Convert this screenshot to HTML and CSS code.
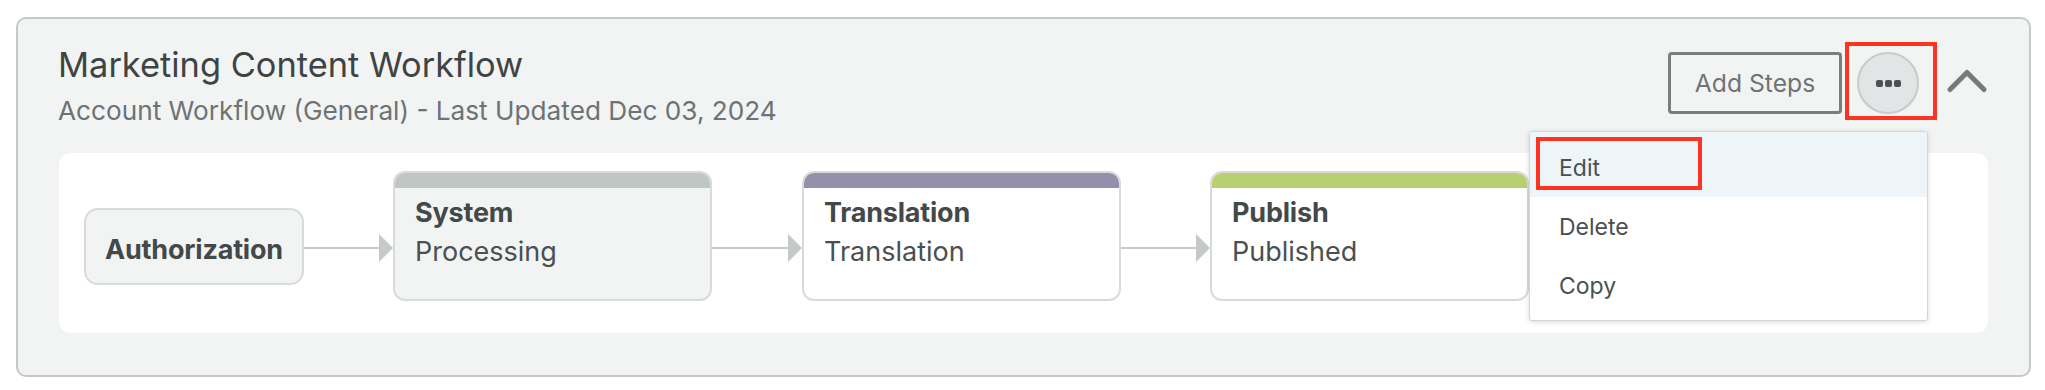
FILE: index.html
```html
<!DOCTYPE html>
<html lang="en">
<head>
    <meta charset="UTF-8">
    <title>Marketing Content Workflow</title>
    <link rel="stylesheet" href="styles.css">
</head>
<body>
    <div class="workflow-card">
        <!-- Header -->
        <div class="card-header">
            <div class="heading">
                <div class="title">Marketing Content Workflow</div>
                <div class="subtitle">Account Workflow (General) - Last Updated Dec 03, 2024</div>
            </div>
            <div class="actions">
                <button class="btn-outline">Add Steps</button>
                <div class="more-wrap">
                    <button class="btn-more">
                        <span class="dot"></span><span class="dot"></span><span class="dot"></span>
                    </button>
                    <span class="highlight ring-more"></span>
                </div>
                <svg class="chevron" width="40" height="24" viewBox="0 0 40 24">
                    <polyline points="3,20.5 20,3.5 37,20.5"/>
                </svg>
            </div>
        </div>

        <!-- Steps -->
        <div class="flow-panel">
            <div class="step-start">Authorization</div>

            <svg class="connector" width="89" height="28" viewBox="0 0 89 28">
                <line x1="0" y1="14" x2="76" y2="14"/>
                <polygon points="75,0 89,14 75,28"/>
            </svg>

            <div class="step step-system">
                <div class="step-bar"></div>
                <div class="step-body">
                    <div class="step-name">System</div>
                    <div class="step-status">Processing</div>
                </div>
            </div>

            <svg class="connector" width="90" height="28" viewBox="0 0 90 28">
                <line x1="0" y1="14" x2="77" y2="14"/>
                <polygon points="76,0 90,14 76,28"/>
            </svg>

            <div class="step step-translation">
                <div class="step-bar"></div>
                <div class="step-body">
                    <div class="step-name">Translation</div>
                    <div class="step-status">Translation</div>
                </div>
            </div>

            <svg class="connector" width="89" height="28" viewBox="0 0 89 28">
                <line x1="0" y1="14" x2="76" y2="14"/>
                <polygon points="75,0 89,14 75,28"/>
            </svg>

            <div class="step step-publish">
                <div class="step-bar"></div>
                <div class="step-body">
                    <div class="step-name">Publish</div>
                    <div class="step-status">Published</div>
                </div>
            </div>
        </div>

        <!-- Dropdown menu -->
        <div class="menu">
            <div class="menu-item active">
                Edit
                <span class="highlight ring-edit"></span>
            </div>
            <div class="menu-item">Delete</div>
            <div class="menu-item">Copy</div>
        </div>
    </div>
</body>
</html>
```

FILE: styles.css
```css
body {
    margin: 0;
    padding: 17px 0 0 16px;
    background-color: #ffffff;
    font-family: Inter, "Liberation Sans", Arial, sans-serif;
}
.workflow-card {
    position: relative;
    box-sizing: border-box;
    width: 2015px;
    height: 360px;
    padding: 26px 41px 0 40px;
    background-color: #f2f3f3;
    border: 2px solid #c6c9c9;
    border-radius: 10px;
}
.card-header {
    display: flex;
    justify-content: space-between;
    align-items: flex-start;
}
.title {
    font-size: 34.4px;
    line-height: 40px;
    color: #3e4444;
}
.subtitle {
    margin-top: 10px;
    font-size: 26.2px;
    line-height: 32px;
    color: #6d7374;
}
.actions {
    display: flex;
    align-items: center;
    margin-top: 7px;
    margin-right: 1px;
}
.btn-outline {
    box-sizing: border-box;
    width: 174px;
    height: 62px;
    padding: 0;
    background: transparent;
    border: 3px solid #787d7d;
    border-radius: 4px;
    font-family: inherit;
    font-size: 24.7px;
    color: #6e7475;
}
.more-wrap {
    position: relative;
    margin-left: 15px;
}
.btn-more {
    box-sizing: border-box;
    display: flex;
    justify-content: center;
    align-items: center;
    gap: 2px;
    width: 62px;
    height: 62px;
    padding: 0;
    background-color: #e3e4e5;
    border: 2px solid #c9cbcb;
    border-radius: 50%;
}
.dot {
    width: 7px;
    height: 7px;
    border-radius: 2px;
    background-color: #4b5151;
}
.chevron {
    margin-left: 28px;
    margin-top: -5px;
}
.chevron polyline {
    fill: none;
    stroke: #757a7a;
    stroke-width: 5;
    stroke-linecap: round;
    stroke-linejoin: round;
}
.highlight {
    position: absolute;
    box-sizing: border-box;
    border: 4px solid #ff3322;
}
.ring-more {
    left: -12px;
    top: -10px;
    width: 92px;
    height: 78px;
}

/* Flow */
.flow-panel {
    display: flex;
    align-items: flex-start;
    height: 180px;
    box-sizing: border-box;
    margin-top: 26px;
    margin-left: 1px;
    padding: 18px 25px 0;
    background-color: #ffffff;
    border-radius: 12px;
}
.step-start {
    box-sizing: border-box;
    width: 220px;
    height: 77px;
    margin-top: 37px;
    display: flex;
    justify-content: center;
    align-items: center;
    padding-top: 5px;
    background-color: #f2f3f3;
    border: 2px solid #d9dbdb;
    border-radius: 14px;
    font-size: 27px;
    font-weight: 700;
    letter-spacing: -0.2px;
    color: #434949;
}
.connector {
    flex: none;
    margin-top: 63px;
}
.connector line {
    stroke: #c5c9c9;
    stroke-width: 2;
}
.connector polygon {
    fill: #c5c9c9;
}
.step {
    box-sizing: border-box;
    width: 319px;
    height: 130px;
    flex: none;
    overflow: hidden;
    background-color: #ffffff;
    border: 2px solid #d9dbdb;
    border-radius: 12px;
}
.step-bar {
    height: 15px;
}
.step-body {
    padding: 5px 20px 0;
    line-height: 39px;
    font-size: 27px;
}
.step-name {
    font-weight: 700;
    letter-spacing: -0.2px;
    color: #434949;
}
.step-status {
    color: #4a5050;
}
.step-system {
    background-color: #f2f3f3;
}
.step-system .step-bar {
    background-color: #c0c5c5;
}
.step-translation .step-bar {
    background-color: #968fac;
}
.step-publish .step-bar {
    background-color: #b8cf72;
}

/* Menu */
.menu {
    position: absolute;
    left: 1511px;
    top: 112px;
    width: 397px;
    padding-bottom: 5px;
    background-color: #ffffff;
    border: 1px solid #d3d6d6;
    border-radius: 3px;
    box-shadow: 0 1px 5px rgba(0, 0, 0, 0.15);
}
.menu-item {
    position: relative;
    height: 59px;
    display: flex;
    align-items: center;
    padding-left: 29px;
    font-size: 23px;
    color: #4a5050;
}
.menu-item.active {
    padding-top: 6px;
    background-color: #eef5f8;
}
.ring-edit {
    left: 6px;
    top: 5px;
    width: 166px;
    height: 53px;
}
```
